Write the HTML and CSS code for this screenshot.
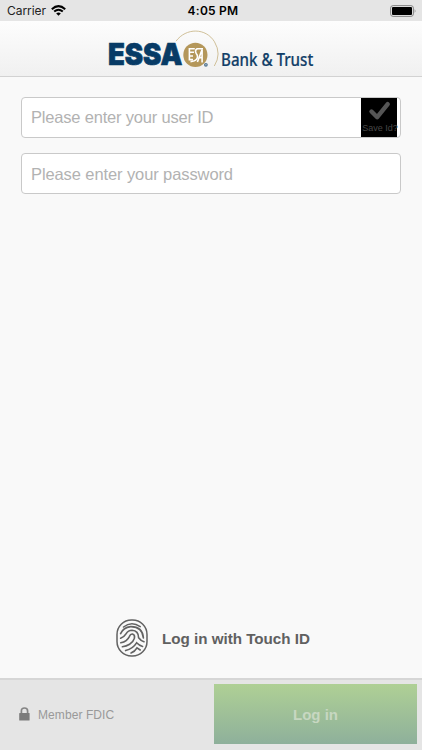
FILE: index.html
```html
<!DOCTYPE html>
<html lang="en">
<head>
<meta charset="utf-8">
<title>ESSA Bank &amp; Trust</title>
<link rel="stylesheet" href="styles.css">
</head>
<body>
<div class="app">
  <div class="status">
    <div class="carrier"><span class="carrier-name">Carrier</span>
      <svg width="15" height="11" viewBox="0 0 15 11" fill="none" stroke="#000" stroke-width="2"><path d="M.8 4.2Q7.5-2 14.2 4.2M3.2 6.6Q7.5 2.8 11.8 6.6"/><path d="M5.2 8.5Q7.5 6.7 9.8 8.5L7.5 10.8Z" fill="#000" stroke="none"/></svg>
    </div>
    <span class="time">4:05 PM</span>
    <svg class="battery" width="27" height="12" viewBox="0 0 27 12"><rect x=".6" y=".6" width="22.8" height="10.8" rx="2.5" fill="none" stroke="#858585"/><rect x="2" y="2" width="20" height="8" rx="1" fill="#000"/><path d="M24.7 4Q26.5 6 24.7 8Z" fill="#858585"/></svg>
  </div>
  <header class="header">
    <svg class="logo" width="230" height="54" viewBox="96 22 230 54" role="img" aria-label="ESSA Bank &amp; Trust">
      <text class="brand" x="107.9" y="65.4" textLength="74.6" lengthAdjust="spacingAndGlyphs">ESSA</text>
      <path d="M176 41.2C186 27.5 206 27.7 214.5 41.8Q221.8 54 214.3 66" fill="none" stroke="#cbb98d" stroke-width=".9"/>
      <circle cx="195.4" cy="54.9" r="12.1" fill="#b4975a"/>
      <g fill="none" stroke="#fff" stroke-width="1.6"><path d="M194.8 48.8H189.4V59.6H193M190 52.2H194M190 56H193"/><path d="M203 48.8H197.2Q194.4 50.4 196.2 53.4Q198.8 56.4 196.4 59.4Q195 61.4 190.5 61.6"/><path d="M197.4 62L202.1 49.6V62.4M199 57.6H202"/></g>
      <circle cx="205.9" cy="64.8" r="1.9" fill="#527590"/><circle cx="205.9" cy="64.8" r=".8" fill="#adbdca"/>
      <text class="brand-sub" x="221" y="65.5" textLength="92.2" lengthAdjust="spacingAndGlyphs">Bank &amp; Trust</text>
    </svg>
  </header>
  <main class="main">
    <div class="field"><span class="ph ph-user">Please enter your user ID</span>
      <div class="save">
        <svg width="26" height="22" viewBox="0 0 26 22"><path d="M5.5 11.5L11.2 17.2L21.7 4.2" fill="none" stroke="#555" stroke-width="4.4" stroke-linecap="round" stroke-linejoin="round"/></svg>
        <span class="save-label">Save Id?</span>
      </div>
    </div>
    <div class="field"><span class="ph ph-pass">Please enter your password</span></div>
    <div class="touch">
      <svg width="32" height="38" viewBox="0 0 32 38" fill="none" stroke="#626262" stroke-width="1.6" stroke-linecap="round"><rect x="1" y="1" width="30" height="36" rx="14.5" stroke-width="1.5"/><path d="M7.5 8Q15.5 1.6 24.2 7.6"/><path d="M4.6 14.6Q7.4 8.4 14.6 7.6Q26.5 7.4 27.4 19"/><path d="M4.6 19.2Q8.2 17.8 10 14.8Q12.2 11.2 16 11.2Q22.6 11.6 22.6 18.8Q24.8 21.8 28 22.8"/><path d="M4.8 23.8Q11.2 22.4 13.3 17.6Q14.4 14.8 16.4 15Q19.2 15.8 18.4 19.2Q17.2 23.2 13.6 25.2Q10.4 27.2 6.4 27.8"/><path d="M9.6 31.6Q17 29.6 20.6 23.8Q23 26.4 26.6 27.4"/><path d="M15 34Q19 32.4 21 28.8L24.2 31"/></svg>
      <span class="touch-label">Log in with Touch ID</span>
    </div>
  </main>
  <footer class="footer">
    <svg class="lock" width="11" height="14" viewBox="0 0 11 14"><path d="M2.4 7V3.9Q2.4 1 5.5 1T8.6 3.9V7" fill="none" stroke="#858585" stroke-width="1.7"/><rect x=".2" y="6" width="10.4" height="7.6" rx=".6" fill="#7c7c7c"/></svg>
    <span class="fdic">Member FDIC</span>
    <div class="login"><span>Log in</span></div>
  </footer>
</div>
</body>
</html>
```
FILE: styles.css
```css
* { box-sizing: border-box; }
body { margin: 0; font-family: "Liberation Sans", sans-serif; }
svg { display: block; flex: none; }
span { white-space: nowrap; }
.app { width: 422px; height: 750px; display: flex; flex-direction: column; background: #f9f9f9; overflow: hidden; }
.status { height: 21px; flex: none; display: grid; grid-template-columns: 1fr auto 1fr; align-items: center; padding: 0 5px 0 7px; background: #e5e5e5; font-family: Inter, sans-serif; font-size: 12px; color: #000; }
.carrier { display: flex; align-items: center; gap: 5px; }
.carrier-name { color: #222; letter-spacing: -.05px; }
.time { font-weight: 600; letter-spacing: .25px; padding-left: 2px; }
.battery { justify-self: end; }
.header { height: 56px; flex: none; display: flex; justify-content: center; padding-top: 1px; background: linear-gradient(#fdfdfd, #f0f0f0); border-bottom: 1px solid #d2d2d2; }
.logo { overflow: visible; }
.brand { font: 900 30px Inter, sans-serif; fill: #073b66; stroke: #073b66; stroke-width: .7; }
.brand-sub { font: 500 17.4px "Noto Sans", sans-serif; fill: #123f68; stroke: #123f68; stroke-width: .2; }
.main { flex: 1; display: flex; flex-direction: column; gap: 15px; padding: 20px 21px 21px; }
.field { height: 41px; flex: none; display: flex; align-items: center; justify-content: space-between; padding: 0 3px 0 9px; background: #fff; border: 1px solid #c9c9c9; border-radius: 4px; }
.ph { font-size: 16.5px; color: #b2b2b2; }
.ph-user { letter-spacing: -.19px; }
.ph-pass { letter-spacing: -.1px; padding-top: 1px; }
.save { width: 36px; height: 39px; display: flex; flex-direction: column; align-items: center; padding-top: 2px; background: #000; color: #474747; }
.save-label { margin-top: 1px; padding-left: 2px; font-size: 9px; line-height: 10px; }
.touch { margin-top: auto; display: flex; align-items: center; justify-content: center; gap: 14px; padding-left: 4px; }
.touch-label { font-size: 15.2px; font-weight: bold; color: #606060; letter-spacing: -.02px; }
.footer { height: 72px; flex: none; display: flex; align-items: center; padding: 0 5px 0 19px; background: #e5e5e5; border-top: 2px solid #d6d6d6; }
.lock { margin-right: 8px; margin-bottom: 2px; }
.fdic { font-size: 12px; color: #999; letter-spacing: .08px; }
.login { width: 203px; height: 60px; margin-left: auto; margin-bottom: 2px; display: flex; align-items: center; justify-content: center; background: linear-gradient(#afd095, #8eb09b); color: #c7d7c1; font-size: 15px; font-weight: bold; }
```
